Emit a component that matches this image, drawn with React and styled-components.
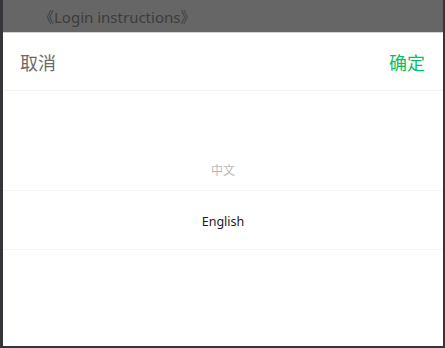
import styled, { createGlobalStyle } from 'styled-components'

const Global = createGlobalStyle`
  html, body {
    margin: 0;
    padding: 0;
    height: 100%;
    background: #35363a;
  }
  #root {
    height: 100%;
  }
`

const Frame = styled.div`
  box-sizing: border-box;
  height: 100vh;
  display: flex;
  flex-direction: column;
  border-left: 3px solid #35363a;
  border-right: 2px solid #35363a;
  border-bottom: 2px solid #35363a;
  font-family: "Noto Sans", "Noto Sans CJK SC", sans-serif;
`

const Mask = styled.div`
  height: 32px;
  flex: none;
  background: #666666;
  display: flex;
  align-items: center;
  padding-left: 36px;
  color: #3c3c3c;
  font-size: 15px;
  overflow: hidden;
`

const Sheet = styled.div`
  flex: 1;
  background: #fff;
  border-top: 1px solid #d2d2d2;
  display: flex;
  flex-direction: column;
`

const Toolbar = styled.div`
  height: 57px;
  flex: none;
  display: flex;
  align-items: center;
  justify-content: space-between;
  padding: 0 18px 0 17px;
  border-bottom: 1px solid #f3f3f3;
  font-family: "Noto Sans CJK SC", sans-serif;
  font-size: 18px;
`

const Action = styled.span`
  color: ${(p) => (p.$primary ? '#07c160' : '#6b6b6b')};
`

const Wheel = styled.div`
  position: relative;
  flex: 1;
  display: flex;
  flex-direction: column;
  padding-top: 52px;
`

const Option = styled.div`
  height: 52px;
  display: flex;
  align-items: center;
  justify-content: center;
  font-family: ${(p) => (p.$cjk ? '"Noto Sans CJK SC", sans-serif' : '"Noto Sans", sans-serif')};
  font-size: ${(p) => (p.$cjk ? '12px' : '12.5px')};
  color: ${(p) => (p.$active ? '#1a1a1a' : '#b8b8b8')};
`

const Indicator = styled.div`
  position: absolute;
  left: 0;
  right: 0;
  top: 99px;
  height: 58px;
  border-top: 1px solid #f5f5f5;
  border-bottom: 1px solid #f5f5f5;
  pointer-events: none;
`

export default function App() {
  return (
    <>
      <Global />
      <Frame>
        <Mask>《Login instructions》</Mask>
        <Sheet>
          <Toolbar>
            <Action>取消</Action>
            <Action $primary>确定</Action>
          </Toolbar>
          <Wheel>
            <Option $cjk>中文</Option>
            <Option $active>English</Option>
            <Indicator />
          </Wheel>
        </Sheet>
      </Frame>
    </>
  )
}
